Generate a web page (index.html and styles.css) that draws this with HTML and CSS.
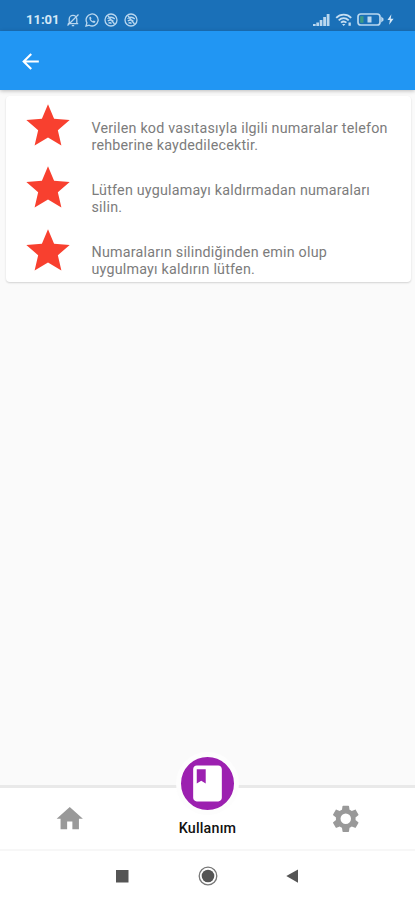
FILE: index.html
```html
<!DOCTYPE html>
<html lang="tr">
<head>
<meta charset="utf-8">
<title>Kullanım</title>
<link rel="stylesheet" href="styles.css">
</head>
<body>
<div class="screen">
  <header class="status">
    <span class="clock">11:01</span>
    <svg class="notif" viewBox="0 0 14 14"><path d="M3.2 10.5V6.2a3.8 3.8 0 0 1 7.6 0v4.3M1.8 10.7h10.4M5.8 12.7h2.4M1.5 12.5l11-11"/></svg>
    <svg class="notif" viewBox="0 0 14 14"><path d="M1 13l.9-3.1A6 6 0 1 1 4.200 12.200z"/><path class="solid" d="M4.500 4l1.300-.3.7 1.700-.7.8c.5 1 1.100 1.600 2.100 2.100l.8-.8 1.700.8-.3 1.200C8.500 11 3.500 7.500 4.500 4z"/></svg>
    <svg class="notif" viewBox="0 0 14 14"><circle cx="7" cy="7" r="6"/><path d="M3.500 5.500C6 3.800 9 4.200 10.800 6M3.800 8c2-1.300 4.500-1 5.700.5M4.500 10.300c1-.7 2.200-.6 3 .2M4 3l6.500 8"/></svg>
    <svg class="notif" viewBox="0 0 14 14"><circle cx="7" cy="7" r="6"/><path d="M3.500 5.500C6 3.800 9 4.200 10.800 6M3.800 8c2-1.300 4.500-1 5.700.5M4.500 10.300c1-.7 2.200-.6 3 .2M4 3l6.500 8"/></svg>
    <span class="grow"></span>
    <svg class="signal" viewBox="0 0 17 13"><path d="M0 13v-2h2.700v2zM3.300 13V9.500H6V13zM6.700 13V7h2.700v6zM10.200 13V4H13v9zM13.700 13V1h2.800v12z"/></svg>
    <svg class="wifi" viewBox="0 0 18 14"><path d="M1.200 4.800c4.300-4.300 10.800-4.300 15 0M3.700 7.300c3-2.800 7-2.800 10 0M6 9.700c1.700-1.500 3.800-1.500 5.400 0"/><path class="solid" d="M7 11h3.400l-1.700 2zM13.500 9.500h2.300v3.200h-2.300z"/></svg>
    <svg class="battery" viewBox="0 0 27 13"><rect x="1" y="1" width="22" height="11" rx="2.800"/><path class="solid" d="M24.200 3.500l2.300 2v2l-2.300 2zM10.500 3.500h4v6h-4z"/><path class="charge" d="M3.200 3.200h3.300v6.600H3.200z"/></svg>
    <svg class="bolt" viewBox="0 0 8 12"><path d="M5 0L.5 6.700h2.800L2.500 12 7.500 5H4.300z"/></svg>
  </header>
  <nav class="appbar">
    <svg class="back" viewBox="0 0 24 24"><path d="M20 11H7.830l5.590-5.590L12 4l-8 8 8 8 1.410-1.410L7.830 13H20z"/></svg>
  </nav>
  <main class="content">
    <ul class="card">
      <li class="row">
        <svg class="star" viewBox="0 0 24 24"><path d="M12 17.270L18.180 21l-1.640-7.030L22 9.240l-7.190-.61L12 2 9.190 8.630 2 9.240l5.460 4.730L5.820 21z"/></svg>
        <p class="text">Verilen kod vasıtasıyla ilgili numaralar telefon<br>rehberine kaydedilecektir.</p>
      </li>
      <li class="row">
        <svg class="star" viewBox="0 0 24 24"><path d="M12 17.270L18.180 21l-1.640-7.030L22 9.240l-7.190-.61L12 2 9.190 8.630 2 9.240l5.460 4.730L5.820 21z"/></svg>
        <p class="text">Lütfen uygulamayı kaldırmadan numaraları<br>silin.</p>
      </li>
      <li class="row">
        <svg class="star" viewBox="0 0 24 24"><path d="M12 17.270L18.180 21l-1.640-7.030L22 9.240l-7.190-.61L12 2 9.190 8.630 2 9.240l5.460 4.730L5.820 21z"/></svg>
        <p class="text">Numaraların silindiğinden emin olup<br>uygulmayı kaldırın lütfen.</p>
      </li>
    </ul>
  </main>
  <nav class="tabs">
    <div class="tab"><svg class="tab-icon" viewBox="0 0 24 24"><path d="M10 20v-6h4v6h5v-8h3L12 3 2 12h3v8z"/></svg></div>
    <div class="tab active">
      <span class="bubble"><svg class="book" viewBox="0 0 24 24"><path d="M18 2H6c-1.100 0-2 .9-2 2v16c0 1.100.9 2 2 2h12c1.100 0 2-.9 2-2V4c0-1.100-.9-2-2-2zM6 4h5v8l-2.500-1.500L6 12V4z"/></svg></span>
      <span class="label">Kullanım</span>
    </div>
    <div class="tab"><svg class="tab-icon" viewBox="0 0 24 24"><path fill-rule="evenodd" d="M19.430 12.980c.04-.32.07-.64.07-.98s-.03-.66-.07-.98l2.110-1.650c.19-.15.24-.42.12-.64l-2-3.460c-.12-.22-.39-.3-.61-.22l-2.490 1c-.52-.4-1.080-.73-1.690-.98l-.38-2.650C14.460 2.180 14.250 2 14 2h-4c-.25 0-.46.18-.49.42l-.38 2.650c-.61.25-1.170.59-1.690.98l-2.490-1c-.23-.09-.49 0-.61.22l-2 3.460c-.13.22-.07.49.12.64l2.110 1.650c-.04.32-.07.65-.07.98s.03.66.07.98l-2.110 1.650c-.19.15-.24.42-.12.64l2 3.460c.12.22.39.3.61.22l2.490-1c.52.4 1.080.73 1.690.98l.38 2.650c.03.24.24.42.49.42h4c.25 0 .46-.18.49-.42l.38-2.650c.61-.25 1.170-.59 1.690-.98l2.490 1c.23.09.49 0 .61-.22l2-3.460c.12-.22.07-.49-.12-.64zM12 16a4 4 0 1 1 0-8 4 4 0 0 1 0 8z"/></svg></div>
  </nav>
  <footer class="system">
    <svg class="sys" viewBox="0 0 20 20"><path d="M4 4h12.500v12.500H4z"/></svg>
    <svg class="sys" viewBox="0 0 20 20"><circle class="ring" cx="10" cy="10" r="8.800"/><circle cx="10" cy="10" r="6.300"/></svg>
    <svg class="sys" viewBox="0 0 20 20"><path d="M3.300 10L15 3.500v13.200z"/></svg>
  </footer>
</div>
</body>
</html>
```
FILE: styles.css
```css
* { box-sizing: border-box; }
body { margin: 0; font-family: Roboto, "Liberation Sans", sans-serif; }
.screen { width: 415px; height: 900px; display: flex; flex-direction: column; background: #fafafa; overflow: hidden; }
.status { height: 31px; flex: none; display: flex; align-items: center; padding: 8px 21px 0 26px; background: #1a70b8; color: #d5e8f7; }
.clock { width: 34px; margin-right: 5.500px; font-size: 13px; font-weight: 700; white-space: nowrap; }
.notif { width: 14px; height: 14px; margin-right: 5.400px; fill: none; stroke: #b9d7ef; stroke-width: 1.300; }
.notif .solid { fill: #b9d7ef; stroke: none; }
.grow { flex: 1; }
.signal { width: 17px; height: 13px; margin-right: 5px; fill: #b9d7ef; }
.wifi { width: 18px; height: 14px; margin-right: 4px; fill: none; stroke: #c5def2; stroke-width: 1.800; }
.wifi .solid { fill: #c5def2; stroke: none; }
.battery { width: 27px; height: 13px; margin-right: 3px; fill: none; stroke: #b9d7ef; stroke-width: 1.700; }
.battery .solid { fill: #b9d7ef; stroke: none; }
.battery .charge { fill: #3b9a86; stroke: none; }
.bolt { width: 7px; height: 11px; fill: #d5e8f7; }
.appbar { height: 59px; flex: none; display: flex; align-items: center; padding: 1px 0 0 17.500px; background: #2196f3; box-shadow: 0 1px 4px rgba(0, 0, 0, .25); position: relative; }
.back { width: 25px; height: 25px; fill: #fff; }
.content { flex: 1; padding: 6px 4.500px 6px 5.500px; }
.card { margin: 0; padding: 4px 0 0 16.500px; height: 186px; list-style: none; background: #fff; border-radius: 4px; box-shadow: 0 1px 2px rgba(0, 0, 0, .16); }
.row { display: flex; height: 62.300px; }
.star { width: 52px; height: 52px; flex: none; margin-right: 17.500px; fill: #f8402f; }
.text { margin: 19.700px 0 0; font-size: 14.300px; line-height: 17px; letter-spacing: .21px; color: #7c7c7c; white-space: nowrap; }
.tabs { height: 66px; flex: none; display: flex; justify-content: space-between; background: #fff; border-top: 3px solid #e9e9e9; border-bottom: 2px solid #f7f7f7; }
.tab { width: 138.300px; display: flex; justify-content: center; align-items: center; }
.tab:first-child { padding-left: 1.500px; }
.tab-icon { width: 31.500px; height: 31.500px; fill: #999; }
.active { flex-direction: column; justify-content: flex-start; }
.bubble { width: 63px; height: 63px; flex: none; margin-top: -36.500px; border: 5px solid #fdfdfd; border-radius: 50%; background: #9c20b0; display: flex; align-items: center; justify-content: center; }
.book { width: 43px; height: 43px; fill: #fff; }
.label { margin-top: 5.500px; font-size: 14.300px; line-height: 16px; letter-spacing: .2px; font-weight: 500; color: #111; }
.system { height: 49px; flex: none; display: flex; align-items: center; justify-content: center; gap: 65.500px; background: #fff; }
.sys { width: 20px; height: 20px; fill: #555; }
.ring { fill: none; stroke: #777; stroke-width: 1.300; }
```
